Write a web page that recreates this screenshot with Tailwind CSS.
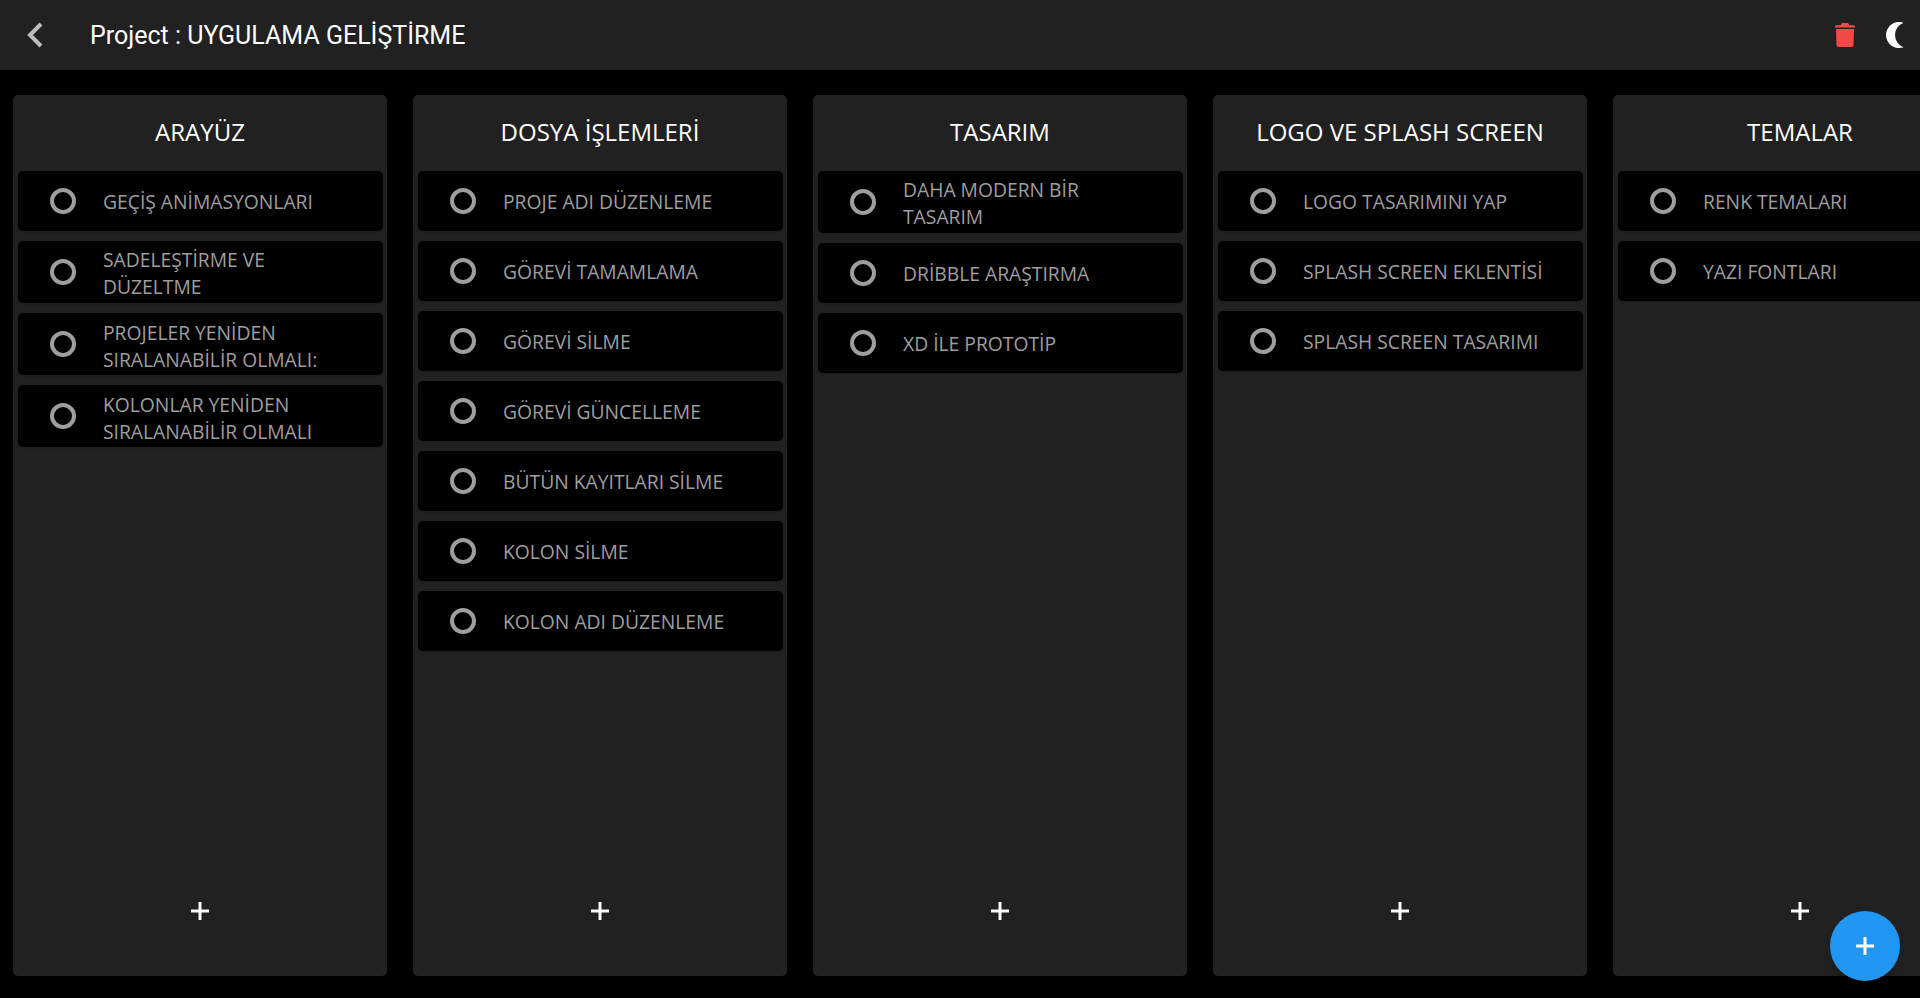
<!DOCTYPE html>
<html lang="en">
<head>
    <meta charset="UTF-8">
    <title>Project</title>
    <script src="https://cdn.jsdelivr.net/npm/@tailwindcss/browser@4"></script>
</head>
<body class="bg-black h-[998px] overflow-hidden font-['Open_Sans',sans-serif]">
<!-- Top bar -->
<header class="h-[70px] bg-[#212121] flex items-center shadow-md">
    <button class="w-[70px] flex justify-center">
        <svg width="18" height="28" viewBox="0 0 18 28" fill="none" stroke="#bdbdbd" stroke-width="4"><path d="M15 3 L4 14 L15 25"/></svg>
    </button>
    <h1 class="ml-[20px] pt-[2px] text-[25px] text-white font-['Roboto',sans-serif]">Project : UYGULAMA GELİŞTİRME</h1>
    <div class="ml-auto flex items-center">
        <svg width="20" height="24" viewBox="0 0 20 24" fill="#f44848" class="mr-[31px]"><path d="M0 3.5 C0 2.5 1 2.2 2 2.2 L6 2 C6 .5 7 0 8 0 L12 0 C13 0 14 .5 14 2 L18 2.2 C19 2.2 20 2.5 20 3.5 L20 4.5 L0 4.5 Z"/><path d="M1 6 L19 6 L18.5 22 C18.5 23.2 17.700 24 16.5 24 L3.5 24 C2.3 24 1.5 23.2 1.5 22 Z"/></svg>
        <svg width="18" height="26" viewBox="0 0 18 26" fill="#ffffff" class="mr-[16px]"><path d="M17.500 .8 A13 13 0 1 0 17.500 25.200 A13 13 0 0 1 17.500 .8 Z"/></svg>
    </div>
</header>

<!-- Columns -->
<main class="flex gap-[26px] pl-[13px] pt-[25px] overflow-hidden">
    <section class="w-[374px] h-[881px] shrink-0 bg-[#212121] rounded-[5px] flex flex-col px-[4.5px]">
        <h2 class="h-[74px] mb-[2px] shrink-0 flex items-center justify-center text-[24px] text-white">ARAYÜZ</h2>
        <div class="flex-1 flex flex-col gap-[10px]">
            <div class="min-h-[60px] bg-black rounded-[5px] flex items-center shadow"><span class="ml-[32.5px] w-[26px] h-[26px] shrink-0 rounded-full border-[4px] border-[#9e9e9e]"></span><p class="ml-[27px] pt-[1px] text-[19.3px] leading-[27px] text-[#9e9e9e]">GEÇİŞ ANİMASYONLARI</p></div>
            <div class="min-h-[60px] py-[4px] bg-black rounded-[5px] flex items-center shadow"><span class="ml-[32.5px] w-[26px] h-[26px] shrink-0 rounded-full border-[4px] border-[#9e9e9e]"></span><p class="ml-[27px] w-[240px] translate-y-[1px] text-[19.3px] leading-[27px] text-[#9e9e9e]">SADELEŞTİRME VE DÜZELTME</p></div>
            <div class="min-h-[60px] py-[4px] bg-black rounded-[5px] flex items-center shadow"><span class="ml-[32.5px] w-[26px] h-[26px] shrink-0 rounded-full border-[4px] border-[#9e9e9e]"></span><p class="ml-[27px] w-[240px] translate-y-[2px] text-[19.3px] leading-[27px] text-[#9e9e9e]">PROJELER YENİDEN SIRALANABİLİR OLMALI:</p></div>
            <div class="min-h-[60px] py-[4px] bg-black rounded-[5px] flex items-center shadow"><span class="ml-[32.5px] w-[26px] h-[26px] shrink-0 rounded-full border-[4px] border-[#9e9e9e]"></span><p class="ml-[27px] w-[240px] translate-y-[2px] text-[19.3px] leading-[27px] text-[#9e9e9e]">KOLONLAR YENİDEN SIRALANABİLİR OLMALI</p></div>
        </div>
        <div class="h-[130px] mb-[2px] pt-[4px] shrink-0 flex items-center justify-center"><svg width="18" height="18" viewBox="0 0 18 18" fill="#fff"><path d="M7.500 0h3v7.500h7.500v3h-7.500v7.500h-3v-7.500h-7.500v-3h7.500z"/></svg></div>
    </section>
    <section class="w-[374px] h-[881px] shrink-0 bg-[#212121] rounded-[5px] flex flex-col px-[4.5px]">
        <h2 class="h-[74px] mb-[2px] shrink-0 flex items-center justify-center text-[24px] text-white">DOSYA İŞLEMLERİ</h2>
        <div class="flex-1 flex flex-col gap-[10px]">
            <div class="min-h-[60px] bg-black rounded-[5px] flex items-center shadow"><span class="ml-[32.5px] w-[26px] h-[26px] shrink-0 rounded-full border-[4px] border-[#9e9e9e]"></span><p class="ml-[27px] pt-[1px] text-[19.3px] leading-[27px] text-[#9e9e9e]">PROJE ADI DÜZENLEME</p></div>
            <div class="min-h-[60px] bg-black rounded-[5px] flex items-center shadow"><span class="ml-[32.5px] w-[26px] h-[26px] shrink-0 rounded-full border-[4px] border-[#9e9e9e]"></span><p class="ml-[27px] pt-[1px] text-[19.3px] leading-[27px] text-[#9e9e9e]">GÖREVİ TAMAMLAMA</p></div>
            <div class="min-h-[60px] bg-black rounded-[5px] flex items-center shadow"><span class="ml-[32.5px] w-[26px] h-[26px] shrink-0 rounded-full border-[4px] border-[#9e9e9e]"></span><p class="ml-[27px] pt-[1px] text-[19.3px] leading-[27px] text-[#9e9e9e]">GÖREVİ SİLME</p></div>
            <div class="min-h-[60px] bg-black rounded-[5px] flex items-center shadow"><span class="ml-[32.5px] w-[26px] h-[26px] shrink-0 rounded-full border-[4px] border-[#9e9e9e]"></span><p class="ml-[27px] pt-[1px] text-[19.3px] leading-[27px] text-[#9e9e9e]">GÖREVİ GÜNCELLEME</p></div>
            <div class="min-h-[60px] bg-black rounded-[5px] flex items-center shadow"><span class="ml-[32.5px] w-[26px] h-[26px] shrink-0 rounded-full border-[4px] border-[#9e9e9e]"></span><p class="ml-[27px] pt-[1px] text-[19.3px] leading-[27px] text-[#9e9e9e]">BÜTÜN KAYITLARI SİLME</p></div>
            <div class="min-h-[60px] bg-black rounded-[5px] flex items-center shadow"><span class="ml-[32.5px] w-[26px] h-[26px] shrink-0 rounded-full border-[4px] border-[#9e9e9e]"></span><p class="ml-[27px] pt-[1px] text-[19.3px] leading-[27px] text-[#9e9e9e]">KOLON SİLME</p></div>
            <div class="min-h-[60px] bg-black rounded-[5px] flex items-center shadow"><span class="ml-[32.5px] w-[26px] h-[26px] shrink-0 rounded-full border-[4px] border-[#9e9e9e]"></span><p class="ml-[27px] pt-[1px] text-[19.3px] leading-[27px] text-[#9e9e9e]">KOLON ADI DÜZENLEME</p></div>
        </div>
        <div class="h-[130px] mb-[2px] pt-[4px] shrink-0 flex items-center justify-center"><svg width="18" height="18" viewBox="0 0 18 18" fill="#fff"><path d="M7.500 0h3v7.500h7.500v3h-7.500v7.500h-3v-7.500h-7.500v-3h7.500z"/></svg></div>
    </section>
    <section class="w-[374px] h-[881px] shrink-0 bg-[#212121] rounded-[5px] flex flex-col px-[4.5px]">
        <h2 class="h-[74px] mb-[2px] shrink-0 flex items-center justify-center text-[24px] text-white">TASARIM</h2>
        <div class="flex-1 flex flex-col gap-[10px]">
            <div class="min-h-[60px] py-[4px] bg-black rounded-[5px] flex items-center shadow"><span class="ml-[32.5px] w-[26px] h-[26px] shrink-0 rounded-full border-[4px] border-[#9e9e9e]"></span><p class="ml-[27px] w-[240px] translate-y-[1px] text-[19.3px] leading-[27px] text-[#9e9e9e]">DAHA MODERN BİR TASARIM</p></div>
            <div class="min-h-[60px] bg-black rounded-[5px] flex items-center shadow"><span class="ml-[32.5px] w-[26px] h-[26px] shrink-0 rounded-full border-[4px] border-[#9e9e9e]"></span><p class="ml-[27px] pt-[1px] text-[19.3px] leading-[27px] text-[#9e9e9e]">DRİBBLE ARAŞTIRMA</p></div>
            <div class="min-h-[60px] bg-black rounded-[5px] flex items-center shadow"><span class="ml-[32.5px] w-[26px] h-[26px] shrink-0 rounded-full border-[4px] border-[#9e9e9e]"></span><p class="ml-[27px] pt-[1px] text-[19.3px] leading-[27px] text-[#9e9e9e]">XD İLE PROTOTİP</p></div>
        </div>
        <div class="h-[130px] mb-[2px] pt-[4px] shrink-0 flex items-center justify-center"><svg width="18" height="18" viewBox="0 0 18 18" fill="#fff"><path d="M7.500 0h3v7.500h7.500v3h-7.500v7.500h-3v-7.500h-7.500v-3h7.500z"/></svg></div>
    </section>
    <section class="w-[374px] h-[881px] shrink-0 bg-[#212121] rounded-[5px] flex flex-col px-[4.5px]">
        <h2 class="h-[74px] mb-[2px] shrink-0 flex items-center justify-center text-[24px] text-white">LOGO VE SPLASH SCREEN</h2>
        <div class="flex-1 flex flex-col gap-[10px]">
            <div class="min-h-[60px] bg-black rounded-[5px] flex items-center shadow"><span class="ml-[32.5px] w-[26px] h-[26px] shrink-0 rounded-full border-[4px] border-[#9e9e9e]"></span><p class="ml-[27px] pt-[1px] text-[19.3px] leading-[27px] text-[#9e9e9e]">LOGO TASARIMINI YAP</p></div>
            <div class="min-h-[60px] bg-black rounded-[5px] flex items-center shadow"><span class="ml-[32.5px] w-[26px] h-[26px] shrink-0 rounded-full border-[4px] border-[#9e9e9e]"></span><p class="ml-[27px] pt-[1px] text-[19.3px] leading-[27px] text-[#9e9e9e]">SPLASH SCREEN EKLENTİSİ</p></div>
            <div class="min-h-[60px] bg-black rounded-[5px] flex items-center shadow"><span class="ml-[32.5px] w-[26px] h-[26px] shrink-0 rounded-full border-[4px] border-[#9e9e9e]"></span><p class="ml-[27px] pt-[1px] text-[19.3px] leading-[27px] text-[#9e9e9e]">SPLASH SCREEN TASARIMI</p></div>
        </div>
        <div class="h-[130px] mb-[2px] pt-[4px] shrink-0 flex items-center justify-center"><svg width="18" height="18" viewBox="0 0 18 18" fill="#fff"><path d="M7.500 0h3v7.500h7.500v3h-7.500v7.500h-3v-7.500h-7.500v-3h7.500z"/></svg></div>
    </section>
    <section class="w-[374px] h-[881px] shrink-0 bg-[#212121] rounded-[5px] flex flex-col px-[4.5px]">
        <h2 class="h-[74px] mb-[2px] shrink-0 flex items-center justify-center text-[24px] text-white">TEMALAR</h2>
        <div class="flex-1 flex flex-col gap-[10px]">
            <div class="min-h-[60px] bg-black rounded-[5px] flex items-center shadow"><span class="ml-[32.5px] w-[26px] h-[26px] shrink-0 rounded-full border-[4px] border-[#9e9e9e]"></span><p class="ml-[27px] pt-[1px] text-[19.3px] leading-[27px] text-[#9e9e9e]">RENK TEMALARI</p></div>
            <div class="min-h-[60px] bg-black rounded-[5px] flex items-center shadow"><span class="ml-[32.5px] w-[26px] h-[26px] shrink-0 rounded-full border-[4px] border-[#9e9e9e]"></span><p class="ml-[27px] pt-[1px] text-[19.3px] leading-[27px] text-[#9e9e9e]">YAZI FONTLARI</p></div>
        </div>
        <div class="h-[130px] mb-[2px] pt-[4px] shrink-0 flex items-center justify-center"><svg width="18" height="18" viewBox="0 0 18 18" fill="#fff"><path d="M7.500 0h3v7.500h7.500v3h-7.500v7.500h-3v-7.500h-7.500v-3h7.500z"/></svg></div>
    </section>
</main>

<!-- Floating add button -->
<button class="absolute left-[1830px] top-[911px] w-[70px] h-[70px] rounded-full bg-[#2196f3] flex items-center justify-center shadow-lg">
    <svg width="18" height="18" viewBox="0 0 18 18" fill="#fff"><path d="M7.500 0h3v7.500h7.500v3h-7.500v7.500h-3v-7.500h-7.500v-3h7.500z"/></svg>
</button>
</body>
</html>
